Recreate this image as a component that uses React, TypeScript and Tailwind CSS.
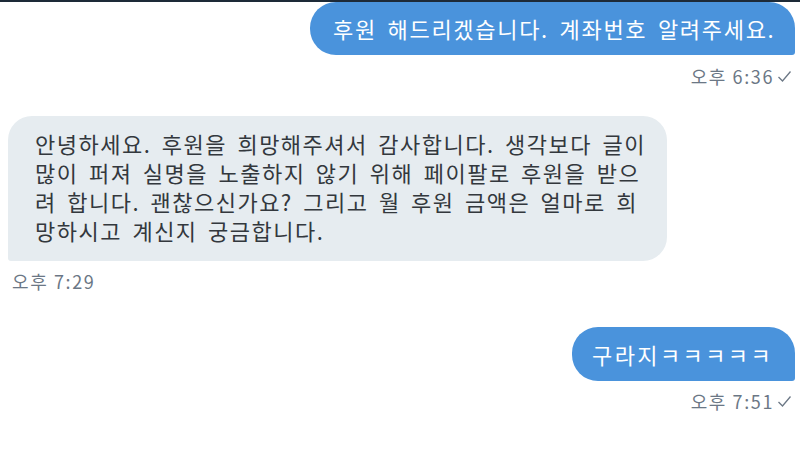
const font = { fontFamily: '"Noto Sans CJK KR", "Noto Sans", sans-serif' }

function Check() {
  return (
    <svg width="15" height="13" viewBox="0 0 15 13" className="ml-[3px]">
      <polyline points="1.5,7 5.5,11 13.5,1.5" fill="none" stroke="#6b7785" strokeWidth="1.3" />
    </svg>
  )
}

function Time({ text, check = false, right = false }: { text: string; check?: boolean; right?: boolean }) {
  return (
    <div className={`flex items-center ${right ? 'justify-end pr-[8px]' : 'justify-start pl-[12px]'}`}>
      <span className="text-[18px] tracking-[1.6px] text-[#6b7785]">{text}</span>
      {check && <Check />}
    </div>
  )
}

export default function App() {
  return (
    <div className="w-[800px] h-[469px] bg-white overflow-hidden flex flex-col" style={font}>
      <div className="h-[2px] bg-[#1d2a38]" />

      {/* outgoing */}
      <div className="flex justify-end pr-[5px]">
        <div className="h-[53px] w-[485px] flex items-center pl-[23px] bg-[#4a93dc] text-white text-[22px] tracking-[1.7px] [word-spacing:4px] rounded-[26px] rounded-br-[3px]">
          후원 해드리겠습니다. 계좌번호 알려주세요.
        </div>
      </div>
      <div className="mt-[8px]">
        <Time text="오후 6:36" check right />
      </div>

      {/* incoming */}
      <div className="mt-[26px] pl-[8px]">
        <div className="w-[659px] bg-[#e6ecf0] rounded-[24px] rounded-bl-[3px] pl-[27px] pt-[13px] pb-[16px] text-[22px] leading-[29px] tracking-[1.5px] [word-spacing:4px] text-[#33383d]">
          <div>안녕하세요. 후원을 희망해주셔서 감사합니다. 생각보다 글이</div>
          <div>많이 퍼져 실명을 노출하지 않기 위해 페이팔로 후원을 받으</div>
          <div>려 합니다. 괜찮으신가요? 그리고 월 후원 금액은 얼마로 희</div>
          <div>망하시고 계신지 궁금합니다.</div>
        </div>
      </div>
      <div className="mt-[7px]">
        <Time text="오후 7:29" />
      </div>

      {/* outgoing */}
      <div className="mt-[32px] flex justify-end pr-[5px]">
        <div className="h-[54px] w-[223px] flex items-center pl-[20px] bg-[#4a93dc] text-white text-[22px] tracking-[2.4px] rounded-[26px] rounded-br-[3px]">
          구라지ㅋㅋㅋㅋㅋ
        </div>
      </div>
      <div className="mt-[7px]">
        <Time text="오후 7:51" check right />
      </div>
    </div>
  )
}
